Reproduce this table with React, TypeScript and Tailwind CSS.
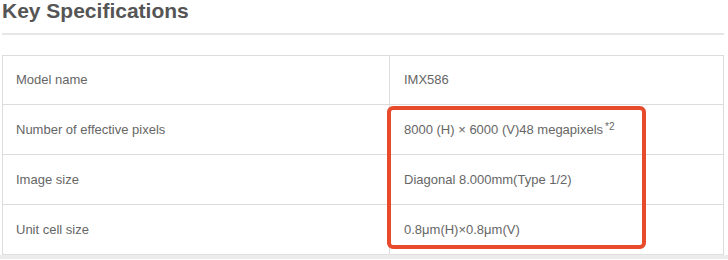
import React from 'react';

const rows: { label: string; value: React.ReactNode; h: string }[] = [
  { label: 'Model name', value: 'IMX586', h: 'h-[49px]' },
  {
    label: 'Number of effective pixels',
    value: (
      <>
        8000 (H) × 6000 (V)48 megapixels
        <sup className="text-[10px] ml-[2px] relative -top-[3px]">*2</sup>
      </>
    ),
    h: 'h-[50px]',
  },
  { label: 'Image size', value: 'Diagonal 8.000mm(Type 1/2)', h: 'h-[50px]' },
  { label: 'Unit cell size', value: '0.8μm(H)×0.8μm(V)', h: 'h-[49px]' },
];

export default function App() {
  return (
    <div
      className="relative w-[728px] h-[260px] overflow-hidden bg-white"
      style={{ fontFamily: '"Liberation Sans", Arial, sans-serif' }}
    >
      <div className="pl-[2px] pr-[4px]">
        {/* 标题 */}
        <h1 className="text-[21px] leading-none font-bold text-[#555]">Key Specifications</h1>
        <div className="mt-[12px] h-[2px] bg-[#e6e6e6]" />

        {/* 规格表 */}
        <div className="mt-[20px] border border-[#dcdcdc] border-b-[#e0e0e0]">
          {rows.map((r, i) => (
            <div
              key={r.label}
              className={`grid grid-cols-[387px_1fr] ${r.h} ${i < rows.length - 1 ? 'border-b border-[#dcdcdc]' : ''}`}
            >
              <div className="flex items-center pl-[13px] text-[13px] text-[#666] border-r border-[#dcdcdc]">
                {r.label}
              </div>
              <div className="flex items-center pl-[14px] text-[13px] text-[#666]">{r.value}</div>
            </div>
          ))}
        </div>
      </div>
      <div className="h-[4px] bg-[#ececec]" />

      {/* 红色标注框 */}
      <div className="absolute left-[387px] top-[106px] w-[259px] h-[143px] border-4 border-[#e84b2c] rounded-[6px]" />
    </div>
  );
}
